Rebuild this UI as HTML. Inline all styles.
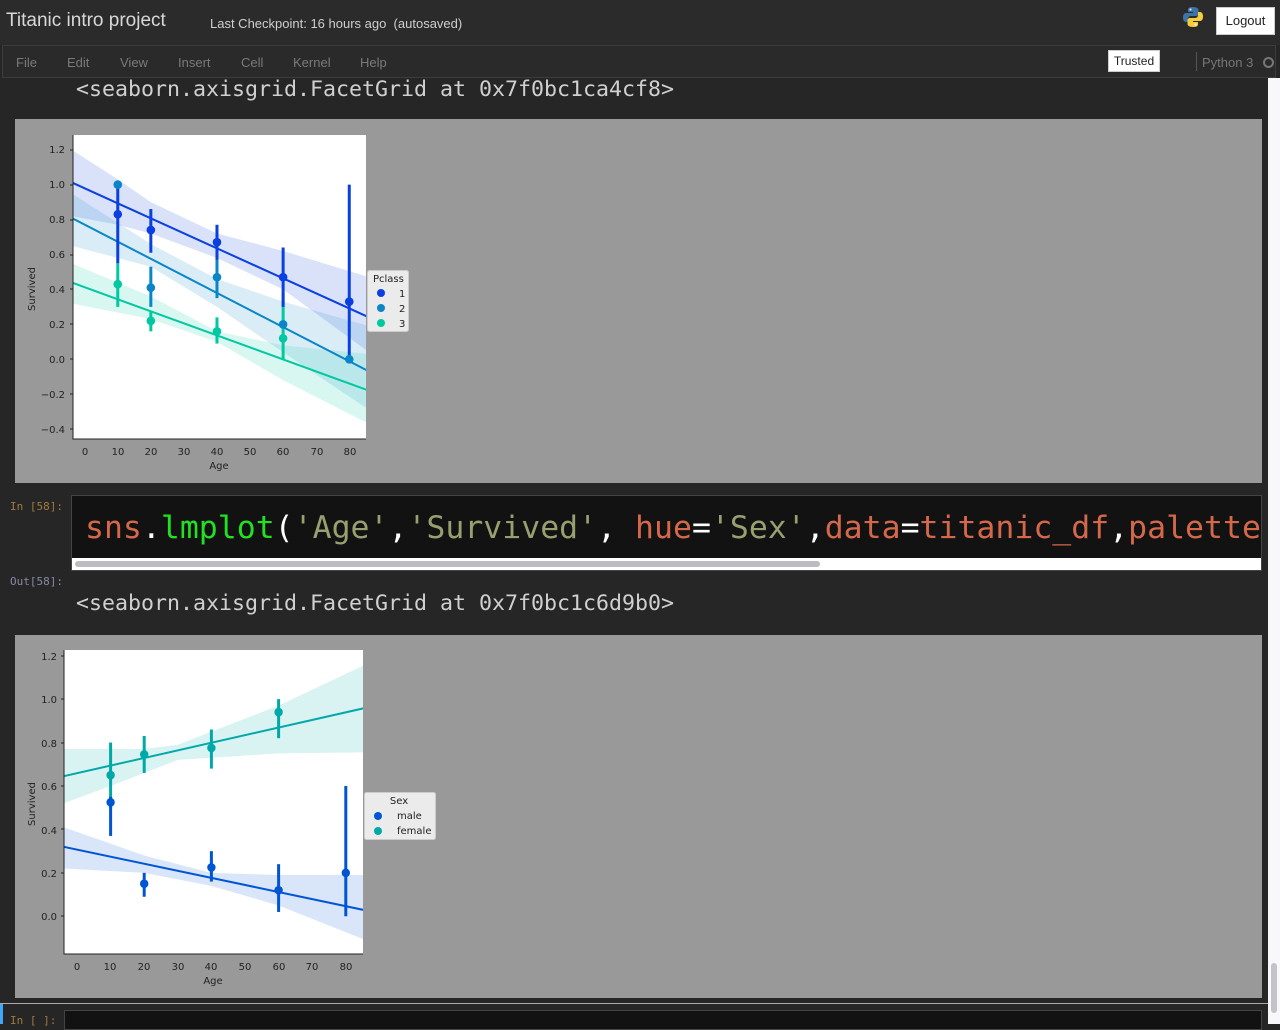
<!DOCTYPE html>
<html><head><meta charset="utf-8"><style>
*{margin:0;padding:0;box-sizing:border-box}
body{width:1280px;height:1024px;overflow:hidden;background:#262626;font-family:"Liberation Sans",sans-serif;position:relative}
.a{position:absolute}
.mono{font-family:"DejaVu Sans Mono","Liberation Mono",monospace}
</style></head><body>
<div class="a" style="left:0;top:0;width:1280px;height:45px;background:#2b2b2b"></div>
<div class="a" style="left:6px;top:10px;font-size:19px;color:#d8d8d8">Titanic intro project</div>
<div class="a" style="left:210px;top:16px;font-size:13px;color:#cfcfcf">Last Checkpoint: 16 hours ago&nbsp;&nbsp;(autosaved)</div>
<svg class="a" style="left:1182px;top:6px" width="22" height="22" viewBox="0 0 22 22">
<path d="M10.5 1C6 1 6 3 6 4v2h5v1H4C2 7 1 9 1 11.5S2 16 4 16h2v-3c0-2 1.5-3 3.5-3h4.5c1.5 0 2.5-1 2.5-2.5V4c0-1.5-1.5-3-6-3z" fill="#3c74aa"/>
<path d="M11.5 21c4.5 0 4.5-2 4.5-3v-2h-5v-1h7c2 0 3-2 3-4.5S20 6 18 6h-2v3c0 2-1.5 3-3.5 3H8c-1.5 0-2.5 1-2.5 2.5V18c0 1.5 1.5 3 6 3z" fill="#f5cf3a"/>
<circle cx="8.5" cy="3.5" r="1" fill="#fff"/><circle cx="13.5" cy="18.5" r="1" fill="#fff"/></svg>
<div class="a" style="left:1216px;top:7px;width:59px;height:28px;background:#fff;border:1px solid #ccc;font-size:13px;color:#222;text-align:center;line-height:26px">Logout</div>
<div class="a" style="left:2px;top:45px;width:1274px;height:33px;background:#2a2a2a;border:1px solid #3c3c3c"></div>
<div class="a" style="top:55px;left:16px;font-size:13px;color:#7a7a7a;word-spacing:0">
<span style="position:absolute;left:0">File</span><span style="position:absolute;left:51px">Edit</span><span style="position:absolute;left:104px">View</span><span style="position:absolute;left:162px">Insert</span><span style="position:absolute;left:225px">Cell</span><span style="position:absolute;left:277px">Kernel</span><span style="position:absolute;left:344px">Help</span></div>
<div class="a" style="left:1108px;top:50px;width:52px;height:22px;background:#fff;border:1px solid #ccc;font-size:12px;color:#222;text-align:center;line-height:20px">Trusted</div>
<div class="a" style="left:1196px;top:52px;width:1px;height:19px;background:#555"></div>
<div class="a" style="left:1202px;top:55px;font-size:13px;color:#777">Python 3</div>
<div class="a" style="left:1263px;top:57px;width:11px;height:11px;border:2px solid #777;border-radius:50%"></div>
<!-- scrollbar -->
<div class="a" style="left:1268px;top:78px;width:12px;height:946px;background:#f8f8fa"></div>
<div class="a" style="left:1271px;top:963px;width:6px;height:50px;background:#c4c4c8;border-radius:3px"></div>

<div class="a mono" style="left:76px;top:77px;font-size:21.6px;color:#d0d0d0;white-space:pre">&lt;seaborn.axisgrid.FacetGrid at 0x7f0bc1ca4cf8&gt;</div>
<div class="a" style="left:15px;top:119px;width:1247px;height:364px;background:#999"></div>
<div class="a mono" style="left:10px;top:500px;font-size:11px;color:#a07a40">In [58]:</div>
<div class="a" style="left:71px;top:495px;width:1191px;height:76px;background:#121212;border:1px solid #444"></div>
<div class="a" style="left:72px;top:558px;width:1189px;height:12px;background:#fff"></div>
<div class="a" style="left:75px;top:561px;width:745px;height:6px;background:#bcbcc2;border-radius:3px"></div>
<div class="a mono" style="left:85px;top:510px;font-size:31.5px;white-space:pre;color:#fff;width:1176px;overflow:hidden"><span style="color:#d5684a">sns</span>.<span style="color:#22e022">lmplot</span>(<span style="color:#98a070">'Age'</span>,<span style="color:#98a070">'Survived'</span>, <span style="color:#d5684a">hue</span>=<span style="color:#98a070">'Sex'</span>,<span style="color:#d5684a">data</span>=<span style="color:#d5684a">titanic_df</span>,<span style="color:#d5684a">palette</span></div>
<div class="a mono" style="left:10px;top:575px;font-size:11px;color:#8a8aa8">Out[58]:</div>
<div class="a mono" style="left:76px;top:591px;font-size:21.6px;color:#d0d0d0;white-space:pre">&lt;seaborn.axisgrid.FacetGrid at 0x7f0bc1c6d9b0&gt;</div>
<div class="a" style="left:15px;top:635px;width:1247px;height:363px;background:#999"></div>

<div class="a" style="left:0;top:1003px;width:1268px;height:1px;background:#aaa"></div>
<div class="a" style="left:0;top:1004px;width:3px;height:20px;background:#42a5f5"></div>
<div class="a mono" style="left:10px;top:1014px;font-size:11px;color:#a07a40">In [ ]:</div>
<div class="a" style="left:64px;top:1010px;width:1198px;height:20px;background:#121212;border:1px solid #444"></div>

<svg class="a" style="left:0;top:0" width="1280" height="1024" font-family="DejaVu Sans, sans-serif" font-size="10" fill="#222">
<defs>
<clipPath id="c1"><rect x="73" y="135" width="293" height="304"/></clipPath>
<clipPath id="c2"><rect x="64" y="650" width="299" height="304"/></clipPath>
</defs>
<rect x="73" y="135" width="293" height="304" fill="#fff"/>
<g clip-path="url(#c1)">
<g transform="translate(84.7,359.3) scale(3.307,-174.7)">
<polygon points="-4,1.2 10,1.03 20,0.9 40,0.72 60,0.62 86,0.47 86,0.04 60,0.40 40,0.58 20,0.72 10,0.77 -4,0.82" fill="#0a3fe0" fill-opacity="0.15"/>
<polygon points="-4,0.95 20,0.66 40,0.46 60,0.33 86,0.19 86,-0.29 60,0.04 40,0.3 20,0.53 -4,0.65" fill="#0a85c8" fill-opacity="0.15"/>
<polygon points="-4,0.55 20,0.36 40,0.16 60,0.08 86,0.03 86,-0.37 60,-0.12 40,0.1 20,0.23 -4,0.32" fill="#00c8a0" fill-opacity="0.15"/>
<line x1="-4" y1="1.013" x2="86" y2="0.24" stroke="#0a3fe0" stroke-width="2" vector-effect="non-scaling-stroke"/>
<line x1="-4" y1="0.81" x2="86" y2="-0.07" stroke="#0a85c8" stroke-width="2" vector-effect="non-scaling-stroke"/>
<line x1="-4" y1="0.44" x2="86" y2="-0.18" stroke="#00c8a0" stroke-width="2" vector-effect="non-scaling-stroke"/>
<line x1="10" y1="0.3" x2="10" y2="0.55" stroke="#00c8a0" stroke-width="3" vector-effect="non-scaling-stroke"/>
<line x1="20" y1="0.16" x2="20" y2="0.27" stroke="#00c8a0" stroke-width="3" vector-effect="non-scaling-stroke"/>
<line x1="40" y1="0.09" x2="40" y2="0.24" stroke="#00c8a0" stroke-width="3" vector-effect="non-scaling-stroke"/>
<line x1="60" y1="0" x2="60" y2="0.38" stroke="#00c8a0" stroke-width="3" vector-effect="non-scaling-stroke"/>
<line x1="20" y1="0.3" x2="20" y2="0.53" stroke="#0a85c8" stroke-width="3" vector-effect="non-scaling-stroke"/>
<line x1="40" y1="0.35" x2="40" y2="0.58" stroke="#0a85c8" stroke-width="3" vector-effect="non-scaling-stroke"/>
<line x1="10" y1="0.55" x2="10" y2="1.0" stroke="#0a3fe0" stroke-width="3" vector-effect="non-scaling-stroke"/>
<line x1="20" y1="0.61" x2="20" y2="0.86" stroke="#0a3fe0" stroke-width="3" vector-effect="non-scaling-stroke"/>
<line x1="40" y1="0.57" x2="40" y2="0.77" stroke="#0a3fe0" stroke-width="3" vector-effect="non-scaling-stroke"/>
<line x1="60" y1="0.3" x2="60" y2="0.64" stroke="#0a3fe0" stroke-width="3" vector-effect="non-scaling-stroke"/>
<line x1="80" y1="0" x2="80" y2="1.0" stroke="#0a3fe0" stroke-width="3" vector-effect="non-scaling-stroke"/>
<g fill="#00c8a0"><ellipse cx="10" cy="0.43" rx="1.3" ry="0.025"/><ellipse cx="20" cy="0.22" rx="1.3" ry="0.025"/><ellipse cx="40" cy="0.16" rx="1.3" ry="0.025"/><ellipse cx="60" cy="0.12" rx="1.3" ry="0.025"/></g>
<g fill="#0a85c8"><ellipse cx="10" cy="1.0" rx="1.3" ry="0.025"/><ellipse cx="20" cy="0.41" rx="1.3" ry="0.025"/><ellipse cx="40" cy="0.47" rx="1.3" ry="0.025"/><ellipse cx="60" cy="0.2" rx="1.3" ry="0.025"/><ellipse cx="80" cy="0" rx="1.3" ry="0.025"/></g>
<g fill="#0a3fe0"><ellipse cx="10" cy="0.83" rx="1.3" ry="0.025"/><ellipse cx="20" cy="0.74" rx="1.3" ry="0.025"/><ellipse cx="40" cy="0.67" rx="1.3" ry="0.025"/><ellipse cx="60" cy="0.47" rx="1.3" ry="0.025"/><ellipse cx="80" cy="0.33" rx="1.3" ry="0.025"/></g>
</g></g>
<path d="M73 135V439H366" fill="none" stroke="#222" stroke-width="1"/>
<g text-anchor="end">
<text x="65" y="153">1.2</text><text x="65" y="188">1.0</text><text x="65" y="223">0.8</text><text x="65" y="258">0.6</text><text x="65" y="293">0.4</text><text x="65" y="328">0.2</text><text x="65" y="363">0.0</text><text x="65" y="398">−0.2</text><text x="65" y="433">−0.4</text>
</g>
<g stroke="#222"><line x1="70" x2="73" y1="150" y2="150"/><line x1="70" x2="73" y1="185" y2="185"/><line x1="70" x2="73" y1="220" y2="220"/><line x1="70" x2="73" y1="255" y2="255"/><line x1="70" x2="73" y1="289" y2="289"/><line x1="70" x2="73" y1="324" y2="324"/><line x1="70" x2="73" y1="359" y2="359"/><line x1="70" x2="73" y1="394" y2="394"/><line x1="70" x2="73" y1="429" y2="429"/></g>
<g text-anchor="middle">
<text x="85" y="455">0</text><text x="118" y="455">10</text><text x="151" y="455">20</text><text x="184" y="455">30</text><text x="217" y="455">40</text><text x="250" y="455">50</text><text x="283" y="455">60</text><text x="317" y="455">70</text><text x="350" y="455">80</text>
<text x="219" y="469">Age</text>
</g>
<text transform="translate(35,289) rotate(-90)" text-anchor="middle">Survived</text>
<rect x="367.5" y="270.5" width="41" height="61" rx="2" fill="#ebebeb" stroke="#ccc"/>
<text x="373" y="282">Pclass</text>
<circle cx="381" cy="293" r="4" fill="#0a3fe0"/><text x="399" y="297">1</text>
<circle cx="381" cy="308" r="4" fill="#0a85c8"/><text x="399" y="312">2</text>
<circle cx="381" cy="323" r="4" fill="#00c8a0"/><text x="399" y="327">3</text>

<rect x="64" y="650" width="299" height="304" fill="#fff"/>
<g clip-path="url(#c2)">
<g transform="translate(77,916.3) scale(3.36,-217.2)">
<polygon points="-4,0.77 20,0.77 30,0.79 40,0.85 60,0.97 86,1.16 86,0.755 60,0.75 30,0.72 10,0.6 -4,0.52" fill="#00a8a8" fill-opacity="0.15"/>
<polygon points="-4,0.41 20,0.28 40,0.2 60,0.19 86,0.19 86,-0.11 60,0.05 40,0.14 20,0.2 -4,0.22" fill="#0055d5" fill-opacity="0.15"/>
<line x1="-4" y1="0.645" x2="86" y2="0.96" stroke="#00a8a8" stroke-width="2" vector-effect="non-scaling-stroke"/>
<line x1="-4" y1="0.32" x2="86" y2="0.027" stroke="#0055d5" stroke-width="2" vector-effect="non-scaling-stroke"/>
<line x1="10" y1="0.5" x2="10" y2="0.8" stroke="#00a8a8" stroke-width="3" vector-effect="non-scaling-stroke"/>
<line x1="20" y1="0.66" x2="20" y2="0.83" stroke="#00a8a8" stroke-width="3" vector-effect="non-scaling-stroke"/>
<line x1="40" y1="0.68" x2="40" y2="0.86" stroke="#00a8a8" stroke-width="3" vector-effect="non-scaling-stroke"/>
<line x1="60" y1="0.82" x2="60" y2="1.0" stroke="#00a8a8" stroke-width="3" vector-effect="non-scaling-stroke"/>
<line x1="10" y1="0.37" x2="10" y2="0.55" stroke="#0055d5" stroke-width="3" vector-effect="non-scaling-stroke"/>
<line x1="20" y1="0.09" x2="20" y2="0.2" stroke="#0055d5" stroke-width="3" vector-effect="non-scaling-stroke"/>
<line x1="40" y1="0.16" x2="40" y2="0.3" stroke="#0055d5" stroke-width="3" vector-effect="non-scaling-stroke"/>
<line x1="60" y1="0.02" x2="60" y2="0.24" stroke="#0055d5" stroke-width="3" vector-effect="non-scaling-stroke"/>
<line x1="80" y1="0" x2="80" y2="0.6" stroke="#0055d5" stroke-width="3" vector-effect="non-scaling-stroke"/>
<g fill="#00a8a8"><ellipse cx="10" cy="0.65" rx="1.25" ry="0.02"/><ellipse cx="20" cy="0.745" rx="1.25" ry="0.02"/><ellipse cx="40" cy="0.775" rx="1.25" ry="0.02"/><ellipse cx="60" cy="0.94" rx="1.25" ry="0.02"/></g>
<g fill="#0055d5"><ellipse cx="10" cy="0.525" rx="1.25" ry="0.02"/><ellipse cx="20" cy="0.15" rx="1.25" ry="0.02"/><ellipse cx="40" cy="0.225" rx="1.25" ry="0.02"/><ellipse cx="60" cy="0.12" rx="1.25" ry="0.02"/><ellipse cx="80" cy="0.2" rx="1.25" ry="0.02"/></g>
</g></g>
<path d="M64 650V954H363" fill="none" stroke="#222" stroke-width="1"/>
<g text-anchor="end">
<text x="57" y="660">1.2</text><text x="57" y="703">1.0</text><text x="57" y="747">0.8</text><text x="57" y="790">0.6</text><text x="57" y="834">0.4</text><text x="57" y="877">0.2</text><text x="57" y="920">0.0</text>
</g>
<g stroke="#222"><line x1="61" x2="64" y1="656" y2="656"/><line x1="61" x2="64" y1="699" y2="699"/><line x1="61" x2="64" y1="743" y2="743"/><line x1="61" x2="64" y1="786" y2="786"/><line x1="61" x2="64" y1="829" y2="829"/><line x1="61" x2="64" y1="873" y2="873"/><line x1="61" x2="64" y1="916" y2="916"/></g>
<g text-anchor="middle">
<text x="77" y="970">0</text><text x="110" y="970">10</text><text x="144" y="970">20</text><text x="178" y="970">30</text><text x="211" y="970">40</text><text x="245" y="970">50</text><text x="279" y="970">60</text><text x="312" y="970">70</text><text x="346" y="970">80</text>
<text x="213" y="984">Age</text>
</g>
<text transform="translate(35,804) rotate(-90)" text-anchor="middle">Survived</text>
<rect x="364.5" y="792.5" width="71" height="47" rx="2" fill="#ebebeb" stroke="#ccc"/>
<text x="399" y="804" text-anchor="middle">Sex</text>
<circle cx="378" cy="816" r="4" fill="#0055d5"/><text x="397" y="819">male</text>
<circle cx="378" cy="831" r="4" fill="#00a8a8"/><text x="397" y="834">female</text>
</svg>
</body></html>
